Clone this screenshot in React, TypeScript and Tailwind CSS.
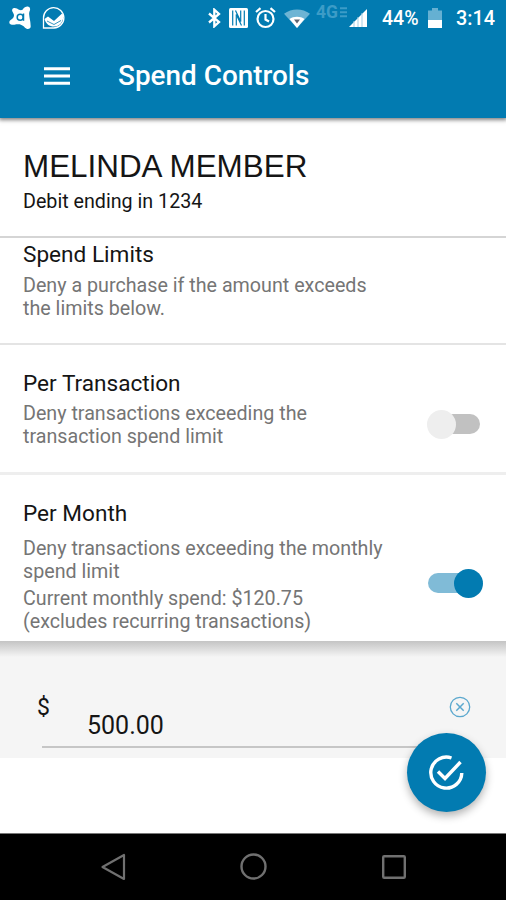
import type { ReactNode } from "react";
import clsx from "clsx";

function StatusBar() {
  return (
    <div className="flex h-9 items-center text-white">
      <svg className="ml-[9px] h-6 w-6 shrink-0" viewBox="0 0 24 24">
        <path
          d="M13.500 3.800C15 1.600 17 .4 18.800.6c2 .3 2.700 2 2.200 3.700-.6 1.500-1 2.600-.8 4.500.2 2.200.6 4 1 6.500.3 1.800.3 3 .5 5 .1 2.400-2.600 3.600-4.500 2.200-1.700-1.200-2.700-2.900-4.800-3.600-2.400-.8-4.400-.6-7-.1-3 .2-5.200-.6-5.100-2.600.1-1.800 1.700-2.300 3-3.500 1.500-1.300 2-2.700 1.500-4.400C4 6.300 2.300 4.600 3.400 3c1-1.500 3-1.300 4.600-.5 2 1.300 3.600 2.300 5.500 1.300Z"
          fill="currentColor"
        />
        <circle cx="11.200" cy="11.200" r="3" fill="none" stroke="#027bb1" strokeWidth="1.500" />
        <path d="M14.500 7.500v7.300" stroke="#027bb1" strokeWidth="1.500" />
      </svg>
      <svg className="ml-[9px] h-6 w-6 shrink-0" viewBox="0 0 24 24">
        <path d="M1.500 12v10H12a10.200 10.200 0 1 0-10.500-10Z" fill="none" stroke="currentColor" strokeWidth="1.300" />
        <path d="M2.500 13 6 10.500l6 4.500 8-7.500 1.500 1.500c0 7-4 11.500-9.500 11.500-4.500 0-8.200-2.500-9.500-7.500Z" fill="currentColor" />
        <path d="m5 15 7 3.500 7-4" fill="none" stroke="#027bb1" strokeWidth=".8" />
      </svg>

      <svg className="ml-[142px] h-5 w-[13px] shrink-0" viewBox="0 0 13 20">
        <path d="M1 5.500 11 14l-4.700 4.300V1.700L11 6 1 14.500" fill="none" stroke="currentColor" strokeWidth="2.300" />
      </svg>
      <svg className="ml-2 h-5 w-[19px] shrink-0" viewBox="0 0 19 20">
        <rect width="19" height="20" rx="1.500" fill="currentColor" />
        <path d="M3.700 17.500V2.500M15.300 17.500v-15M7.300 17.500v-11M11.700 2.500v11" fill="none" stroke="#027bb1" strokeWidth="1.200" />
        <path d="m6.500 2.500 5.200 11M7.300 6.500l5.200 11" stroke="#027bb1" strokeWidth="1.200" />
      </svg>
      <svg className="ml-[7px] h-[22px] w-[21px] shrink-0" viewBox="0 0 21 22" fill="none" stroke="currentColor" strokeWidth="2.200">
        <circle cx="10.500" cy="12" r="8" />
        <path d="M10.500 7v5.500l3.500 2M1 5l4.500-3.800M20 5l-4.500-3.800" />
      </svg>
      <svg className="ml-2 h-[19px] w-[26px] shrink-0" viewBox="0 0 26 19">
        <path d="M0 4.800C7.500-1 18.500-1 26 4.800L13 19Z" fill="#6db4d4" />
        <path d="M5.500 10c4-3 11-3 15 0L13 19Z" fill="#fff" />
        <path d="M10 10.500h6L13 14.500Z" fill="#5e6470" />
      </svg>
      <div className="mb-3 ml-[6px] flex h-4 w-8 shrink-0 items-center text-[#3c9cc7]">
        <span className="w-6 text-[17.500px] font-bold leading-4">4G</span>
        <svg className="h-[11px] w-[7px]" viewBox="0 0 7 11">
          <path d="M0 1.200h7M0 5.200h7M0 9.200h7" stroke="currentColor" strokeWidth="2" />
        </svg>
      </div>
      <svg className="ml-px h-[18px] w-[19px] shrink-0" viewBox="0 0 19 18">
        <path d="M0 18 18 0v18Z" fill="#fff" />
        <path d="M5 12v6M9 8v10M13 4v14" stroke="#a5cee3" />
      </svg>
      <span className="ml-[14px] mt-[2px] w-[46px] text-[19.500px] font-medium">44%</span>
      <svg className="h-5 w-[14px] shrink-0" viewBox="0 0 14 20">
        <path d="M4 0h6v2.500h4V12H0V2.500h4Z" fill="#65b0d2" />
        <path d="M0 12h14v8H0Z" fill="#fff" />
      </svg>
      <span className="ml-[14px] mt-[2px] text-[19.800px] font-medium">3:14</span>
    </div>
  );
}

function Header() {
  return (
    <header className="relative z-10 h-[118px] shrink-0 bg-[#027bb1] shadow-[0_1px_4px_1px_rgba(0,0,0,0.5)]">
      <StatusBar />
      <div className="flex h-20 items-center text-white">
        <svg className="ml-11 h-[18px] w-[26px]" viewBox="0 0 26 18">
          <path d="M0 1.700h26M0 9h26M0 16.300h26" stroke="currentColor" strokeWidth="3" />
        </svg>
        <h1 className="ml-[48px] text-[27.900px] font-medium leading-8">Spend Controls</h1>
      </div>
    </header>
  );
}

function Toggle({ on = false }: { on?: boolean }) {
  return (
    <div
      className={clsx(
        "flex h-5 w-[52px] shrink-0 items-center rounded-full",
        on ? "justify-end bg-[#80bbd7]" : "justify-start bg-[#c1c1c1]"
      )}
    >
      <span className={clsx("h-[29px] w-[29px] shrink-0 rounded-full", on ? "-mr-[3px] bg-[#027bb1]" : "-ml-px bg-[#eeeeee]")} />
    </div>
  );
}

function Note({ children, className }: { children: ReactNode; className?: string }) {
  return <p className={clsx("whitespace-nowrap text-[19.700px] leading-[23px] text-[#757575]", className)}>{children}</p>;
}

function AmountField() {
  return (
    <section className="h-[117px] shrink-0 bg-[#f5f5f5] text-[#151515]">
      <div className="h-4 bg-linear-to-b from-[#c4c4c4] to-[#f5f5f5]" />
      <div className="flex h-[89px] items-start">
        <span className="ml-[37px] mt-[37px] w-[50px] text-[23px] leading-7">$</span>
        <span className="mt-[53px] text-[25px] leading-8">500.00</span>
        <svg className="ml-auto mr-[35px] mt-[39px] h-[22px] w-[22px]" viewBox="0 0 22 22" fill="none" stroke="#5ba8ce">
          <circle cx="11" cy="11" r="9.700" strokeWidth="1.300" />
          <path d="m7.300 7.300 7.400 7.400M14.700 7.300l-7.400 7.400" strokeWidth="1.500" />
        </svg>
      </div>
      <div className="ml-[42px] mr-10 border-t-2 border-[#c6c6c6]" />
    </section>
  );
}

function NavBar() {
  return (
    <nav className="flex h-[67px] shrink-0 items-center border-t border-[#777] bg-black">
      <svg className="ml-[100px] h-7 w-[26px]" viewBox="0 0 26 28">
        <path d="M24 2v24L2.500 14Z" fill="none" stroke="#707070" strokeWidth="2.200" strokeLinejoin="round" />
      </svg>
      <svg className="ml-[114px] h-7 w-7" viewBox="0 0 28 28">
        <circle cx="13.500" cy="13.500" r="12" fill="none" stroke="#707070" strokeWidth="2.400" />
      </svg>
      <svg className="ml-[114px] h-6 w-6" viewBox="0 0 24 24">
        <rect x="1.200" y="1.200" width="21.600" height="21.600" rx="1" fill="none" stroke="#707070" strokeWidth="2.400" />
      </svg>
    </nav>
  );
}

export default function App() {
  return (
    <div className="relative flex h-[900px] w-[506px] flex-col overflow-hidden bg-white font-['Roboto',sans-serif] text-[#151515]">
      <Header />

      <section className="h-[120px] shrink-0 border-b-2 border-[#d5d5d5] pl-[23px] pt-[31px]">
        <h2 className="font-['Liberation_Sans',sans-serif] text-[31.400px] leading-9">MELINDA MEMBER</h2>
        <p className="mt-[3px] text-[19.700px] leading-7">Debit ending in 1234</p>
      </section>

      <section className="h-[107px] shrink-0 border-b-2 border-[#e4e4e4] pl-[23px] pt-[3px]">
        <h3 className="text-[22.600px] leading-7">Spend Limits</h3>
        <Note className="mt-[5px]">
          Deny a purchase if the amount exceeds
          <br />
          the limits below.
        </Note>
      </section>

      <section className="flex h-[130px] shrink-0 justify-between border-b-[3px] border-[#eeeeee] pl-[23px] pr-[26px] pt-[25px]">
        <div>
          <h3 className="text-[22.600px] leading-7">Per Transaction</h3>
          <Note className="mt-1">
            Deny transactions exceeding the
            <br />
            transaction spend limit
          </Note>
        </div>
        <div className="pt-11">
          <Toggle />
        </div>
      </section>

      <section className="flex h-[166px] shrink-0 justify-between pl-[23px] pr-[26px] pt-[25px]">
        <div>
          <h3 className="text-[22.600px] leading-7">Per Month</h3>
          <Note className="mt-[9px]">
            Deny transactions exceeding the monthly
            <br />
            spend limit
          </Note>
          <Note className="mt-[4px]">
            Current monthly spend: $120.75
            <br />
            (excludes recurring transactions)
          </Note>
        </div>
        <div className="pt-[73px]">
          <Toggle on />
        </div>
      </section>

      <AmountField />
      <div className="grow" />
      <NavBar />

      {/* Floating save button */}
      <button className="absolute bottom-[88px] right-5 flex h-[79px] w-[79px] items-center justify-center rounded-full bg-[#027bb1] shadow-[0_4px_8px_rgba(0,0,0,0.3)]">
        <svg className="h-9 w-9" viewBox="0 0 36 36" fill="none" stroke="#fff" strokeWidth="3.400">
          <path d="M22.500 3A15.500 15.500 0 1 0 32.800 18" />
          <path d="m9 16.500 7 7L31.500 7" />
        </svg>
      </button>
    </div>
  );
}
